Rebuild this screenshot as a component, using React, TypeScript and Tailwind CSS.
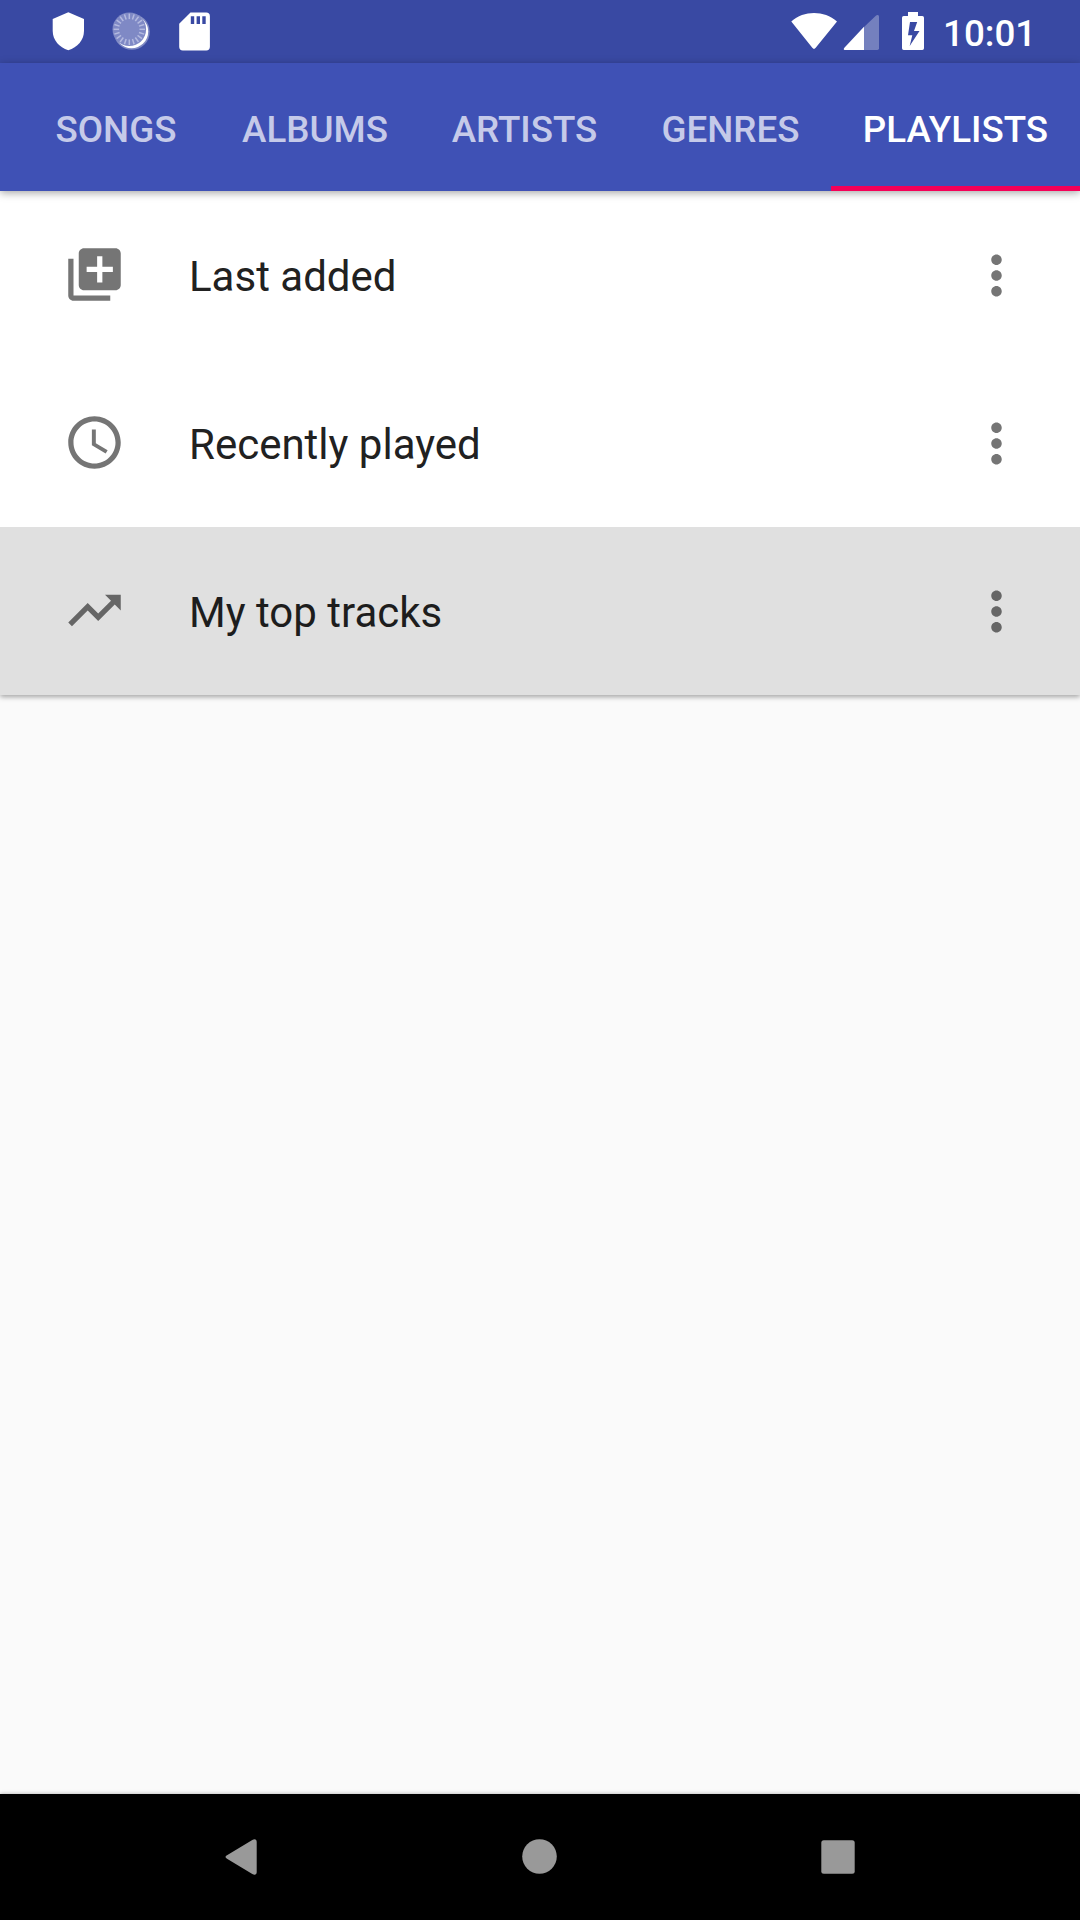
import React from "react";

const ICONS = {
  added:
    "M4 6H2v14c0 1.1.9 2 2 2h14v-2H4V6zm16-4H8c-1.1 0-2 .9-2 2v12c0 1.1.9 2 2 2h12c1.1 0 2-.9 2-2V4c0-1.1-.9-2-2-2zm-1 9h-4v4h-2v-4H9V9h4V5h2v4h4v2z",
  recent:
    "M11.99 2C6.47 2 2 6.48 2 12s4.47 10 9.99 10C17.52 22 22 17.52 22 12S17.52 2 11.99 2zM12 20c-4.42 0-8-3.58-8-8s3.58-8 8-8 8 3.58 8 8-3.58 8-8 8zm.5-13H11v6l5.25 3.15.75-1.23-4.5-2.67z",
  top: "M16 6l2.29 2.29-4.88 4.88-4-4L2 16.59 3.41 18l6-6 4 4 6.3-6.29L22 12V6z",
  more: "M12 8c1.1 0 2-.9 2-2s-.9-2-2-2-2 .9-2 2 .9 2 2 2zm0 2c-1.1 0-2 .9-2 2s.9 2 2 2 2-.9 2-2-.9-2-2-2zm0 6c-1.1 0-2 .9-2 2s.9 2 2 2 2-.9 2-2-.9-2-2-2z",
};

function Icon({ d, className = "" }: { d: string; className?: string }) {
  return (
    <svg viewBox="0 0 24 24" className={`h-[63px] w-[63px] shrink-0 ${className}`} fill="currentColor">
      <path d={d} />
    </svg>
  );
}

function StatusBar() {
  const rays = Array.from({ length: 20 }, (_, i) => i * 18);
  return (
    <header className="flex h-[63px] shrink-0 items-start justify-between bg-[#3949a3] text-white">
      <svg viewBox="0 0 230 63" className="h-[63px] w-[230px]" fill="currentColor">
        <path d="M68.3 12.3L84 19v12c0 9-6.5 16.5-15.7 19.3C59.2 47.5 52.7 40 52.7 31V19z" />
        <circle cx="131.8" cy="31.8" r="18" opacity="0.35" />
        <circle cx="131.5" cy="31.5" r="16.7" />
        <circle cx="129.3" cy="29.3" r="16.8" fill="#7f89c5" />
        <g stroke="#b4bae0" strokeWidth="1.5">
          {rays.map((a) => (
            <path key={a} d="M129.3 13.6v5.5" transform={`rotate(${a} 129.3 29.3)`} />
          ))}
        </g>
        <path
          fillRule="evenodd"
          d="M190.5 12.5h15.7a3.7 3.7 0 0 1 3.7 3.7v30.5a3.7 3.7 0 0 1-3.7 3.7h-23.3a3.7 3.7 0 0 1-3.7-3.7V23.8zM190.8 16.3v7.7h3.4v-7.7zM196.6 16.3v7.7h3.4v-7.7zM202.3 16.3v7.7h3.4v-7.7z"
        />
      </svg>
      <div className="flex">
        <svg viewBox="780 0 166 63" className="h-[63px] w-[166px]" fill="currentColor">
          <path d="M791.3 21.5C804 10.3 824 10.3 837 21.5L815.7 47.8Q814 50 812.3 47.8z" />
          <path
            d="M879 16.8V48.3a1.7 1.7 0 0 1-1.7 1.7h-13.3v-23.1l12.1-11.3c1.3-1.2 2.9-.5 2.9 1.2z"
            opacity="0.3"
          />
          <path d="M864 26.8V50h-19.3c-1.2 0-1.2-1.2-.3-2.2z" />
          <path
            fillRule="evenodd"
            d="M908 12h10v4h4.3a1.7 1.7 0 0 1 1.7 1.7v30.6a1.7 1.7 0 0 1-1.7 1.7h-18.600a1.7 1.7 0 0 1-1.7-1.7v-30.6a1.7 1.7 0 0 1 1.7-1.7h4.3zM910 22l-2 13.2h4.3l-2.6 10.800 9.800-15h-5.500l3.200-9z"
          />
        </svg>
        <div className="mt-[12px] -ml-[3px] w-[137px] text-[36.75px] leading-[44px] font-medium">10:01</div>
      </div>
    </header>
  );
}

const tabs = [
  { label: "SONGS", width: "w-[190px]" },
  { label: "ALBUMS", width: "w-[208px]" },
  { label: "ARTISTS", width: "w-[211px]" },
  { label: "GENRES", width: "w-[201px]" },
  { label: "PLAYLISTS", width: "w-[249px]" },
];

function Tabs() {
  return (
    <nav className="relative z-10 flex h-32 shrink-0 justify-end bg-[#3f51b5] text-[36.75px] font-medium whitespace-nowrap shadow-[0_2px_8px_rgba(0,0,0,0.35)]">
      {tabs.map(({ label, width }) => (
        <button
          key={label}
          className={
            label === "PLAYLISTS"
              ? `shrink-0 border-b-[5px] border-[#f50057] pt-[10px] text-white ${width}`
              : `shrink-0 pt-[5px] text-[#c5cae9] ${width}`
          }
        >
          {label}
        </button>
      ))}
    </nav>
  );
}

const playlists = [
  { title: "Last added", icon: ICONS.added, pressed: false },
  { title: "Recently played", icon: ICONS.recent, pressed: false },
  { title: "My top tracks", icon: ICONS.top, pressed: true },
];

export default function App() {
  return (
    <div className="flex h-[1920px] w-[1080px] flex-col overflow-hidden bg-[#fafafa] font-['Roboto',sans-serif]">
      <StatusBar />
      <Tabs />
      <main className="min-h-0 flex-1">
        <ul className="bg-white shadow-[0_2px_5px_rgba(0,0,0,0.35)]">
          {playlists.map(({ title, icon, pressed }) => (
            <li
              key={title}
              className={
                pressed
                  ? "flex h-[168px] items-center bg-[#e0e0e0] pr-[52px] pl-[63px] text-[#666666]"
                  : "flex h-[168px] items-center pr-[52px] pl-[63px] text-[#757575]"
              }
            >
              <Icon d={icon} className="mb-[2px]" />
              <span
                className={
                  pressed
                    ? "ml-[63px] flex-1 pt-[3px] text-[42px] text-[#1d1d1d]"
                    : "ml-[63px] flex-1 pt-[3px] text-[42px] text-[#212121]"
                }
              >
                {title}
              </span>
              <Icon d={ICONS.more} />
            </li>
          ))}
        </ul>
      </main>
      <footer className="flex h-[126px] shrink-0 bg-black text-[#999999] shadow-[0_0_4px_rgba(0,0,0,0.3)]">
        <svg viewBox="0 1794 1080 126" className="h-[126px] w-[1080px]" fill="currentColor">
          <path d="M227 1855.300l25.300-15.300c2.500-1.500 4.400-.7 4.400 2v30c0 2.700-1.900 3.500-4.400 2l-25.300-15.300c-2-1.200-2-2.200 0-3.400z" />
          <circle cx="539.5" cy="1856.5" r="17.3" />
          <rect x="821.3" y="1840.3" width="33.4" height="33.4" rx="2.5" />
        </svg>
      </footer>
    </div>
  );
}
